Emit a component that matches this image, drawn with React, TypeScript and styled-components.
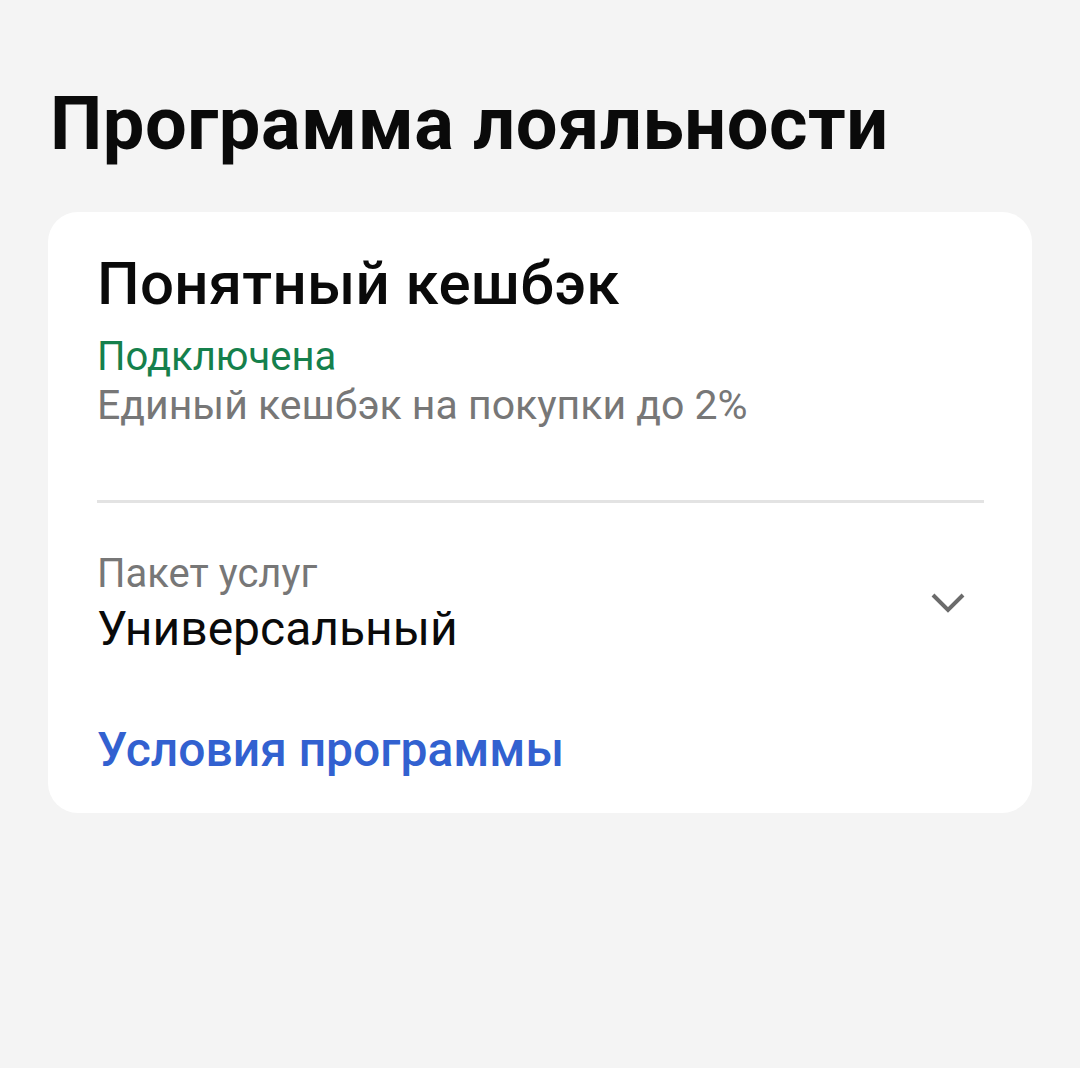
import React from "react";
import styled, { createGlobalStyle } from "styled-components";

const GlobalStyle = createGlobalStyle`
    html, body {
        margin: 0;
        padding: 0;
        background: #f4f4f4;
        font-family: Roboto, "Noto Sans", sans-serif;
    }
`

const Page = styled.div`
    min-height: 1068px;
    padding: 82px 48px 0 48px;
    box-sizing: border-box;
    display: flex;
    flex-direction: column;
`

const Title = styled.h1`
    margin: 0 0 0 2px;
    font-size: 74px;
    font-weight: 700;
    line-height: 84px;
    color: #0a0a0a;
    letter-spacing: 0.5px;
`

const Card = styled.div`
    margin-top: 46px;
    background: #ffffff;
    border-radius: 30px;
    padding: 37px 48px 34px 49px;
    display: flex;
    flex-direction: column;
`

const CardTitle = styled.h2`
    margin: 0 0 14px 0;
    font-size: 60px;
    font-weight: 500;
    line-height: 70px;
    color: #0a0a0a;
    letter-spacing: 0.3px;
`

const Line = styled.div<{ $color: string, $size: number, $height: number }>`
    font-size: ${p => p.$size}px;
    line-height: ${p => p.$height}px;
    color: ${p => p.$color};
`

const Divider = styled.div`
    height: 3px;
    background: #e3e3e3;
    margin: 71px 0 0 0;
`

const Selector = styled.div`
    margin-top: 45px;
    display: flex;
    flex-direction: row;
    align-items: center;
    justify-content: space-between;
`

const SelectorText = styled.div`
    display: flex;
    flex-direction: column;
`

const Chevron = styled.svg`
    width: 36px;
    height: 24px;
    margin-right: 18px;
`

const Link = styled.a`
    margin-top: 63px;
    font-size: 48px;
    font-weight: 500;
    line-height: 58px;
    color: #3261d0;
    text-decoration: none;
`

function App() {
    return (
        <>
            <GlobalStyle />
            <Page>
                <Title>Программа лояльности</Title>
                <Card>
                    <CardTitle>Понятный кешбэк</CardTitle>
                    <Line $color="#15804c" $size={40} $height={48}>Подключена</Line>
                    <Line $color="#777777" $size={41} $height={48}>Единый кешбэк на покупки до 2%</Line>
                    <Divider />
                    <Selector>
                        <SelectorText>
                            <Line $color="#777777" $size={40} $height={52}>Пакет услуг</Line>
                            <Line $color="#0a0a0a" $size={48} $height={58}>Универсальный</Line>
                        </SelectorText>
                        <Chevron viewBox="0 0 36 24" fill="none">
                            <path d="M3 4 L18 19 L33 4" stroke="#6b6b6b" strokeWidth="4" />
                        </Chevron>
                    </Selector>
                    <Link href="#">Условия программы</Link>
                </Card>
            </Page>
        </>
    );
}

export default App;
